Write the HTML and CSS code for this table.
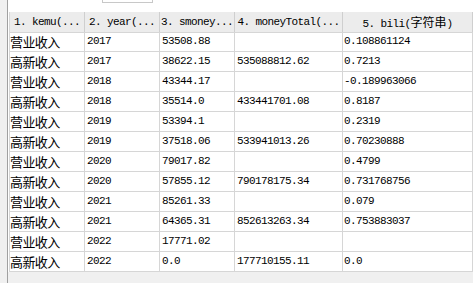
FILE: index.html
```html
<!DOCTYPE html>
<html>
<head>
<meta charset="utf-8">
<link rel="stylesheet" href="styles.css">
</head>
<body>
<div class="app">
  <div class="side"></div>
  <div class="main">
    <div class="toolbar"><div class="box"></div></div>
    <div class="grid">
      <div class="hc">1. kemu(...</div><div class="hc">2. year(...</div><div class="hc">3. smoney...</div><div class="hc">4. moneyTotal(...</div><div class="hc">5. bili(<span class="cjk">字符串</span>)</div><div class="hc"></div>

      <div class="c zh">营业收入</div><div class="c">2017</div><div class="c">53508.88</div><div class="c"></div><div class="c b">0.108861124</div><div class="c e"></div>
      <div class="c zh">高新收入</div><div class="c">2017</div><div class="c">38622.15</div><div class="c">535088812.62</div><div class="c b">0.7213</div><div class="c e"></div>
      <div class="c zh">营业收入</div><div class="c">2018</div><div class="c">43344.17</div><div class="c"></div><div class="c b">-0.189963066</div><div class="c e"></div>
      <div class="c zh">高新收入</div><div class="c">2018</div><div class="c">35514.0</div><div class="c">433441701.08</div><div class="c b">0.8187</div><div class="c e"></div>
      <div class="c zh">营业收入</div><div class="c">2019</div><div class="c">53394.1</div><div class="c"></div><div class="c b">0.2319</div><div class="c e"></div>
      <div class="c zh">高新收入</div><div class="c">2019</div><div class="c">37518.06</div><div class="c">533941013.26</div><div class="c b">0.70230888</div><div class="c e"></div>
      <div class="c zh">营业收入</div><div class="c">2020</div><div class="c">79017.82</div><div class="c"></div><div class="c b">0.4799</div><div class="c e"></div>
      <div class="c zh">高新收入</div><div class="c">2020</div><div class="c">57855.12</div><div class="c">790178175.34</div><div class="c b">0.731768756</div><div class="c e"></div>
      <div class="c zh">营业收入</div><div class="c">2021</div><div class="c">85261.33</div><div class="c"></div><div class="c b">0.079</div><div class="c e"></div>
      <div class="c zh">高新收入</div><div class="c">2021</div><div class="c">64365.31</div><div class="c">852613263.34</div><div class="c b">0.753883037</div><div class="c e"></div>
      <div class="c zh">营业收入</div><div class="c">2022</div><div class="c">17771.02</div><div class="c"></div><div class="c b"></div><div class="c e"></div>
      <div class="c zh">高新收入</div><div class="c">2022</div><div class="c">0.0</div><div class="c">177710155.11</div><div class="c b">0.0</div><div class="c e"></div>
    </div>
    <div class="footer"></div>
  </div>
</div>
</body>
</html>
```

FILE: styles.css
```css
html, body {
  margin: 0;
  padding: 0;
  background: #ffffff;
}
body {
  width: 473px;
  height: 283px;
  overflow: hidden;
  font-family: "Liberation Mono", monospace;
}
.app {
  display: flex;
  height: 283px;
}
.side {
  width: 7px;
  flex: none;
  background: #f0f0f0;
  border-right: 1px solid #a0a0a0;
}
.main {
  flex: 1;
  display: flex;
  flex-direction: column;
  min-width: 0;
}
.toolbar {
  height: 12px;
  flex: none;
  background: #ffffff;
}
.box {
  margin-left: 94px;
  width: 49px;
  height: 2px;
  border: 1px solid #c8c8c8;
  border-top: none;
  background: #ffffff;
}
.grid {
  display: grid;
  grid-template-columns: 75px 75px 75px 108px 130px 1fr;
  grid-auto-rows: 20px;
  margin-left: 1px;
  border-left: 1px solid #d6d6d6;
  flex: none;
}
.hc {
  box-sizing: border-box;
  height: 21px;
  background: #ececec;
  border-right: 1px solid #cfcfcf;
  border-bottom: 1px solid #d6d6d6;
  font-size: 11px;
  letter-spacing: -0.6px;
  line-height: 20px;
  text-align: center;
  white-space: nowrap;
  overflow: hidden;
  color: #000;
}
.grid > .hc { grid-row: 1; }
.cjk {
  font-family: "Noto Sans CJK SC", sans-serif;
  font-size: 12px;
  letter-spacing: 0;
}
.c {
  box-sizing: border-box;
  height: 20px;
  border-right: 1px solid #d6d6d6;
  border-bottom: 1px solid #d6d6d6;
  font-size: 11px;
  letter-spacing: -0.6px;
  line-height: 19px;
  padding-left: 2px;
  white-space: nowrap;
  overflow: hidden;
  color: #000;
}
.c.b { padding-left: 1px; }
.c.e { border-right: none; }
.c.zh {
  font-family: "Noto Sans CJK SC", sans-serif;
  font-size: 13px;
  letter-spacing: -0.6px;
  padding-left: 0;
  line-height: 19px;
}
.footer {
  flex: 1;
  background: #f0f0f0;
}
```
